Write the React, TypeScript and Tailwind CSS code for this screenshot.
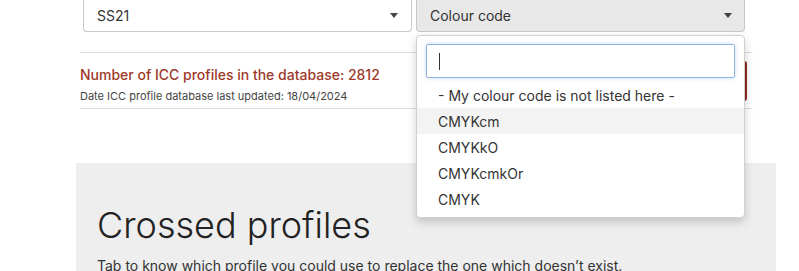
import { useState } from 'react';

const options = ['- My colour code is not listed here -', 'CMYKcm', 'CMYKkO', 'CMYKcmkOr', 'CMYK'];

function Caret() {
  return <span className="h-0 w-0 border-x-[4px] border-t-[5px] border-x-transparent border-t-[#444]" />;
}

export default function App() {
  const [hover] = useState(1);

  return (
    <div className="relative h-[271px] w-[799px] overflow-hidden bg-white font-['Inter',sans-serif] text-[#333]">
      <div className="ml-[80px] w-[672px]">
        <div className="flex gap-[4px] pl-[3px] pr-[7px]">
          <div className="flex h-[32px] w-[329px] items-center justify-between rounded-b-[4px] border border-t-0 border-[#c8c8c8] bg-white pl-[13px] pr-[13px] text-[14px]">
            <span>SS21</span>
            <Caret />
          </div>
          <div className="relative w-[329px]">
            <div className="flex h-[32px] items-center justify-between rounded-b-[4px] border border-t-0 border-[#c8c8c8] bg-[#e8e8e8] pl-[13px] pr-[12px] text-[14px]">
              <span>Colour code</span>
              <Caret />
            </div>
            <div className="absolute left-0 top-[35px] z-10 w-[329px] rounded-[4px] border border-[#d0d0d0] bg-white pb-[5px] shadow-[0_4px_10px_rgba(0,0,0,0.18)]">
              <div className="px-[9px] pt-[8px] pb-[4px]">
                <div className="flex h-[34px] items-center rounded-[2px] border border-[#8fb4e0] px-[12px] shadow-[0_0_4px_rgba(100,150,220,0.35)]">
                  <span className="h-[17px] w-px bg-[#333]" />
                </div>
              </div>
              {options.map((o, i) => (
                <div
                  key={o}
                  className={`flex h-[26px] items-center pl-[21px] text-[14px] ${i === hover ? 'bg-[#f3f3f3]' : ''}`}
                >
                  {o}
                </div>
              ))}
            </div>
          </div>
        </div>

        <div className="mt-[20px] border-t border-[#dcdcdc]" />
        <div className="flex h-[55px] items-start justify-between">
          <div className="pt-[13px]">
            <div className="text-[14px] font-medium leading-[18px] text-[#9c3a2a]">Number of ICC profiles in the database: 2812</div>
            <div className="mt-[5px] text-[11px] leading-[14px] text-[#444]">Date ICC profile database last updated: 18/04/2024</div>
          </div>
          <div className="mr-[5px] mt-[8px] h-[40px] w-[120px] rounded-[3px] bg-[#8e2a1f]" />
        </div>
        <div className="border-t border-[#dcdcdc]" />
      </div>

      <div className="ml-[76px] mt-[54px] w-[700px] bg-[#eeeeee] pl-[21px] pt-[40px] pb-[20px]">
        <h1 className="text-[36px] font-light leading-[44px] text-[#222]">Crossed profiles</h1>
        <p className="mt-[8px] text-[14px] text-[#333]">Tab to know which profile you could use to replace the one which doesn’t exist.</p>
      </div>
    </div>
  );
}
